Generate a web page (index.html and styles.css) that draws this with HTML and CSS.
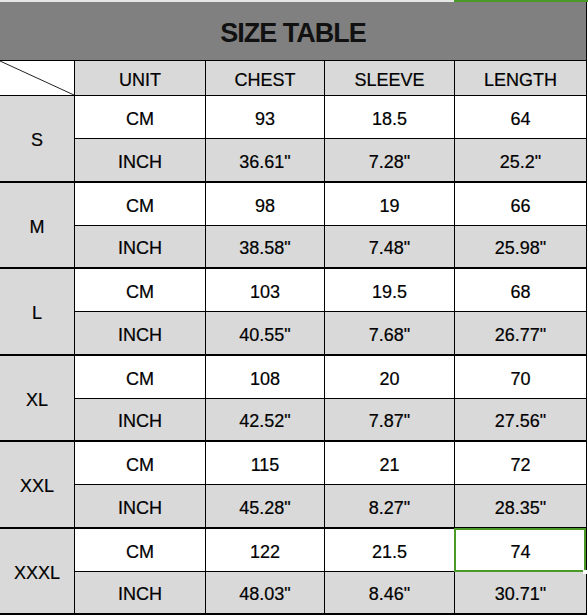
FILE: index.html
```html
<!DOCTYPE html>
<html>
<head>
<meta charset="utf-8">
<link rel="stylesheet" href="styles.css">
</head>
<body>
<div class="topbar"><div class="topbar-gray"></div><div class="topbar-green"></div></div>
<div class="sheet">
  <div class="title">SIZE TABLE</div>
  <div class="head-row">
    <div class="cell c0 corner"><svg class="diag" viewBox="0 0 74 34" preserveAspectRatio="none"><line x1="0" y1="0" x2="74" y2="34" stroke="#222" stroke-width="1"/></svg></div>
    <div class="cell c1">UNIT</div>
    <div class="cell c2">CHEST</div>
    <div class="cell c3">SLEEVE</div>
    <div class="cell c4">LENGTH</div>
  </div>

  <div class="group tall">
    <div class="size">S</div>
    <div class="rows">
      <div class="row cm"><div class="cell c1">CM</div><div class="cell c2">93</div><div class="cell c3">18.5</div><div class="cell c4">64</div></div>
      <div class="row inch"><div class="cell c1">INCH</div><div class="cell c2">36.61"</div><div class="cell c3">7.28"</div><div class="cell c4">25.2"</div></div>
    </div>
  </div>
  <div class="group">
    <div class="size">M</div>
    <div class="rows">
      <div class="row cm"><div class="cell c1">CM</div><div class="cell c2">98</div><div class="cell c3">19</div><div class="cell c4">66</div></div>
      <div class="row inch"><div class="cell c1">INCH</div><div class="cell c2">38.58"</div><div class="cell c3">7.48"</div><div class="cell c4">25.98"</div></div>
    </div>
  </div>
  <div class="group tall">
    <div class="size">L</div>
    <div class="rows">
      <div class="row cm"><div class="cell c1">CM</div><div class="cell c2">103</div><div class="cell c3">19.5</div><div class="cell c4">68</div></div>
      <div class="row inch"><div class="cell c1">INCH</div><div class="cell c2">40.55"</div><div class="cell c3">7.68"</div><div class="cell c4">26.77"</div></div>
    </div>
  </div>
  <div class="group">
    <div class="size">XL</div>
    <div class="rows">
      <div class="row cm"><div class="cell c1">CM</div><div class="cell c2">108</div><div class="cell c3">20</div><div class="cell c4">70</div></div>
      <div class="row inch"><div class="cell c1">INCH</div><div class="cell c2">42.52"</div><div class="cell c3">7.87"</div><div class="cell c4">27.56"</div></div>
    </div>
  </div>
  <div class="group tall">
    <div class="size">XXL</div>
    <div class="rows">
      <div class="row cm"><div class="cell c1">CM</div><div class="cell c2">115</div><div class="cell c3">21</div><div class="cell c4">72</div></div>
      <div class="row inch"><div class="cell c1">INCH</div><div class="cell c2">45.28"</div><div class="cell c3">8.27"</div><div class="cell c4">28.35"</div></div>
    </div>
  </div>
  <div class="group">
    <div class="size">XXXL</div>
    <div class="rows">
      <div class="row cm"><div class="cell c1">CM</div><div class="cell c2">122</div><div class="cell c3">21.5</div><div class="cell c4 selected">74<span class="handle"></span></div></div>
      <div class="row inch"><div class="cell c1">INCH</div><div class="cell c2">48.03"</div><div class="cell c3">8.46"</div><div class="cell c4">30.71"</div></div>
    </div>
  </div>
</div>
</body>
</html>
```

FILE: styles.css
```css
* { box-sizing: border-box; }
html, body { margin: 0; padding: 0; background: #ffffff; }
body {
  width: 588px;
  height: 615px;
  overflow: hidden;
  font-family: "Liberation Sans", Arial, sans-serif;
  color: #000;
}
.topbar { display: flex; height: 2px; }
.topbar-gray { width: 454px; background: #e6e6e6; }
.topbar-green { flex: 1; background: #4a9a2a; }

.sheet {
  width: 587px;
  border-right: 1px solid #000;
}
.title {
  height: 59px;
  background: #808080;
  border-bottom: 1px solid #000;
  display: flex;
  align-items: center;
  justify-content: center;
  font-weight: bold;
  font-size: 27px;
  letter-spacing: -1px;
  padding-top: 4px;
  color: #111;
}
.head-row {
  display: flex;
  height: 35px;
  border-bottom: 1px solid #000;
  background: #d9d9d9;
}
.cell {
  display: flex;
  align-items: center;
  justify-content: center;
  font-size: 18px;
  padding-top: 4px;
  border-right: 1px solid #000;
  position: relative;
  -webkit-text-stroke: 0.2px #000;
}
.c0 { width: 75px; }
.c1 { width: 131px; }
.c2 { width: 119px; }
.c3 { width: 130px; }
.c4 { width: 131px; border-right: none; }
.corner { background: #fff; padding: 0; }
.diag { display: block; width: 74px; height: 34px; }

.group {
  display: flex;
  border-bottom: 2px solid #000;
}
.size {
  width: 75px;
  border-right: 1px solid #000;
  background: #d9d9d9;
  display: flex;
  align-items: center;
  justify-content: center;
  font-size: 18px;
  padding-top: 4px;
  -webkit-text-stroke: 0.2px #000;
}
.rows { flex: 1; display: flex; flex-direction: column; }
.row { display: flex; }
.row.cm { height: 43px; border-bottom: 1px solid #000; background: #fff; }
.row.inch { height: 41px; background: #d9d9d9; }
.tall .row.inch { height: 42px; }

.selected::after {
  content: "";
  position: absolute;
  left: -1px;
  top: -1px;
  right: 0;
  bottom: -1px;
  border: 2px solid #4a9a2a;
}
.handle {
  position: absolute;
  right: -1px;
  bottom: -3px;
  width: 4px;
  height: 4px;
  background: #fff;
  z-index: 2;
}
```
